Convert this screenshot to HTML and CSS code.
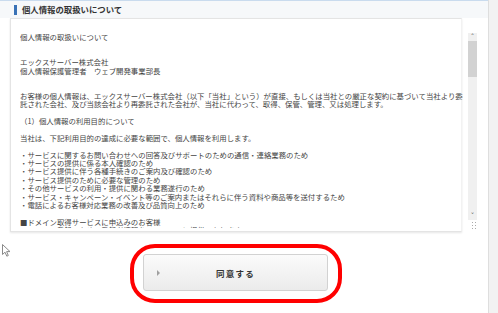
FILE: index.html
```html
<!DOCTYPE html>
<html lang="ja">

<head>
    <meta charset="UTF-8">
    <meta name="viewport" content="width=device-width, initial-scale=1.0">
    <title>個人情報の取扱いについて</title>
    <link rel="stylesheet" href="styles.css">
</head>

<body>
    <div class="page">
        <div class="main">
            <header class="sec-head">
                <span class="accent"></span>
                <h1 class="sec-title">個人情報の取扱いについて</h1>
            </header>

            <div class="terms-row">
                <div class="terms-box">
                    <div class="terms-text">
                        <p>個人情報の取扱いについて</p>
                        <p class="gap2">エックスサーバー株式会社<br>個人情報保護管理者　ウェブ開発事業部長</p>
                        <p class="gap2">お客様の個人情報は、エックスサーバー株式会社（以下「当社」という）が直接、もしくは当社との厳正な契約に基づいて当社より委<br>託された会社、及び当該会社より再委託された会社が、当社に代わって、取得、保管、管理、又は処理します。</p>
                        <p class="gap1">（1）個人情報の利用目的について</p>
                        <p class="gap1">当社は、下記利用目的の達成に必要な範囲で、個人情報を利用します。</p>
                        <p class="gap1">・サービスに関するお問い合わせへの回答及びサポートのための通信・連絡業務のため<br>
                            ・サービスの提供に係る本人確認のため<br>
                            ・サービス提供に伴う各種手続きのご案内及び確認のため<br>
                            ・サービス提供のために必要な管理のため<br>
                            ・その他サービスの利用・提供に関わる業務遂行のため<br>
                            ・サービス・キャンペーン・イベント等のご案内またはそれらに伴う資料や商品等を送付するため<br>
                            ・電話によるお客様対応業務の改善及び品質向上のため</p>
                        <p class="gap1">■ドメイン取得サービスに申込みのお客様<br>
                            ・ドメイン登録のため、登録者情報をレジストリに提供いたします</p>
                    </div>
                </div>
                <div class="scrollbar">
                    <div class="sb-btn">&#x2C4;</div>
                    <div class="sb-thumb"></div>
                    <div class="sb-track"></div>
                    <div class="sb-btn">&#x2C5;</div>
                    <div class="sb-grip"></div>
                </div>
            </div>

            <div class="agree">
                <div class="agree-ring">
                    <a href="#" class="agree-button">
                        <span class="arrow"></span>
                        同意する
                    </a>
                </div>
            </div>

            <svg class="cursor" width="9" height="13" viewBox="0 0 9 13">
                <path d="M0.5 0.5 L0.5 10.5 L3 8.2 L4.8 12.2 L6.3 11.5 L4.6 7.6 L8 7.6 Z" fill="#fff" stroke="#8a8a8a"
                    stroke-width="1" stroke-linejoin="round" />
            </svg>
        </div>
        <div class="side"></div>
    </div>
</body>

</html>
```

FILE: styles.css
```css
body {
    margin: 0;
    padding: 0;
    background: #ffffff;
    font-family: "Noto Sans CJK JP", "Noto Sans", sans-serif;
    color: #444;
    overflow: hidden;
}

.page {
    display: flex;
    width: 498px;
    height: 313px;
}

.main {
    position: relative;
    width: 488px;
}

.side {
    flex: 1;
    background: #f2f2f2;
    border-left: 1px solid #dedede;
}

/* section header */
.sec-head {
    display: flex;
    align-items: center;
    height: 17px;
    border-top: 1px solid #c9dbee;
    background: #f6f8fa;
    padding-left: 14px;
}

.accent {
    width: 3px;
    height: 10px;
    background: #3a72b6;
    margin-right: 5px;
}

.sec-title {
    margin: 0;
    font-size: 8.4px;
    font-weight: bold;
    color: #333;
    line-height: 1;
}

/* terms box */
.terms-row {
    display: flex;
    margin-left: 10px;
}

.terms-box {
    width: 452px;
    height: 214px;
    box-sizing: border-box;
    padding: 13px 0 0 9px;
    border: 1px solid #e4e4e4;
    border-right-color: #f2f2f2;
    box-shadow: 0 1px 2px rgba(0, 0, 0, 0.1);
}

.terms-text {
    width: 448px;
    height: 196px;
    padding-top: 1px;
    box-sizing: border-box;
    overflow: hidden;
    font-size: 7.4px;
    line-height: 8.4px;
    white-space: nowrap;
}

.terms-text p {
    margin: 0;
}

.terms-text .gap2 {
    margin-top: 16.8px;
}

.terms-text .gap1 {
    margin-top: 8.4px;
}

/* fake textarea scrollbar */
.scrollbar {
    display: flex;
    flex-direction: column;
    width: 9px;
    margin: 15px 0 0 6px;
    height: 196px;
}

.sb-btn {
    height: 8px;
    background: #f0f0f0;
    font-size: 7px;
    line-height: 9px;
    text-align: center;
    color: #505050;
    font-family: "DejaVu Sans", sans-serif;
}

.sb-thumb {
    height: 36px;
    background: #d2d2d2;
}

.sb-track {
    flex: 1;
    background: #f0f0f0;
}

.sb-grip {
    height: 8px;
    background: radial-gradient(circle, #aaa 0.5px, transparent 0.8px) 0 0 / 3px 3px;
    margin-left: 3px;
    margin-top: 1px;
}

/* agree button */
.agree {
    padding: 12px 0 0 130px;
}

.agree-ring {
    display: inline-block;
    border: 4px solid #ff0000;
    border-radius: 25px;
    padding: 6px 10px 8px 9px;
}

.agree-button {
    position: relative;
    display: flex;
    align-items: center;
    justify-content: center;
    width: 185px;
    height: 37px;
    box-sizing: border-box;
    border: 1px solid #d2d2d2;
    border-radius: 3px;
    background: linear-gradient(#fbfbfb, #ebebeb);
    text-decoration: none;
    color: #333;
    font-size: 8.5px;
    font-weight: bold;
    letter-spacing: 1.2px;
}

.arrow {
    position: absolute;
    left: 13px;
    top: 15px;
    width: 0;
    height: 0;
    border-top: 3px solid transparent;
    border-bottom: 3px solid transparent;
    border-left: 3px solid #a0a0a0;
}

.cursor {
    position: absolute;
    left: 2px;
    top: 244px;
}
```
